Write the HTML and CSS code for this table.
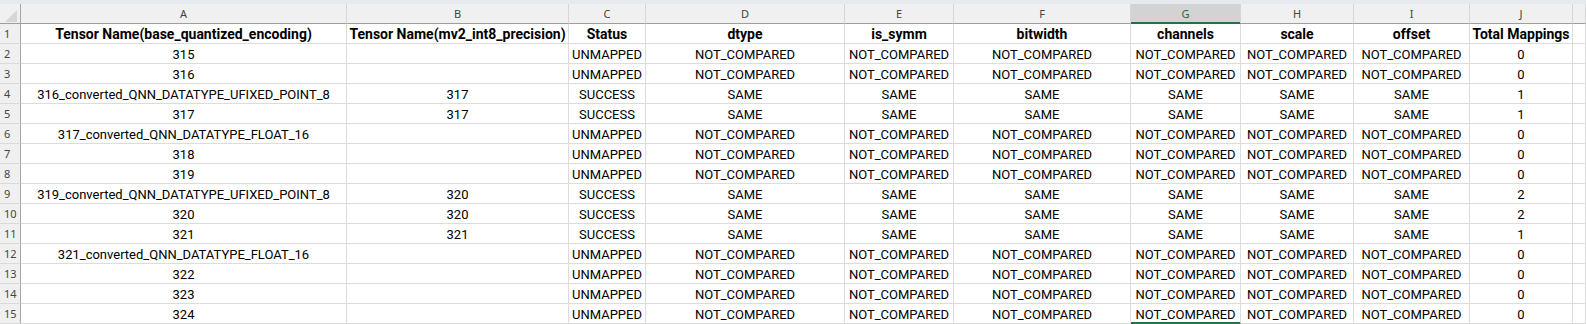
FILE: index.html
```html
<!DOCTYPE html>
<html>
<head>
<meta charset="utf-8">
<link rel="stylesheet" href="styles.css">
</head>
<body>
<div class="sheet">
  <div class="topstrip"></div>
  <div class="row colhead">
    <div class="corner"><svg width="20" height="19" viewBox="0 0 20 19"><polygon points="5,18 17,18 17,6" fill="#d6d6d6"/></svg></div>
    <div class="ch">A</div><div class="ch">B</div><div class="ch">C</div><div class="ch">D</div><div class="ch">E</div><div class="ch">F</div><div class="ch sel">G</div><div class="ch">H</div><div class="ch">I</div><div class="ch">J</div><div class="ch"></div>
  </div>
  <div class="row head">
    <div class="rh">1</div><div class="c">Tensor Name(base_quantized_encoding)</div><div class="c">Tensor Name(mv2_int8_precision)</div><div class="c">Status</div><div class="c">dtype</div><div class="c">is_symm</div><div class="c">bitwidth</div><div class="c">channels</div><div class="c">scale</div><div class="c">offset</div><div class="c">Total Mappings</div><div class="c"></div>
  </div>
  <div class="row">
    <div class="rh">2</div><div class="c">315</div><div class="c"></div><div class="c">UNMAPPED</div><div class="c">NOT_COMPARED</div><div class="c">NOT_COMPARED</div><div class="c">NOT_COMPARED</div><div class="c">NOT_COMPARED</div><div class="c">NOT_COMPARED</div><div class="c">NOT_COMPARED</div><div class="c">0</div><div class="c"></div>
  </div>
  <div class="row">
    <div class="rh">3</div><div class="c">316</div><div class="c"></div><div class="c">UNMAPPED</div><div class="c">NOT_COMPARED</div><div class="c">NOT_COMPARED</div><div class="c">NOT_COMPARED</div><div class="c">NOT_COMPARED</div><div class="c">NOT_COMPARED</div><div class="c">NOT_COMPARED</div><div class="c">0</div><div class="c"></div>
  </div>
  <div class="row">
    <div class="rh">4</div><div class="c">316_converted_QNN_DATATYPE_UFIXED_POINT_8</div><div class="c">317</div><div class="c">SUCCESS</div><div class="c">SAME</div><div class="c">SAME</div><div class="c">SAME</div><div class="c">SAME</div><div class="c">SAME</div><div class="c">SAME</div><div class="c">1</div><div class="c"></div>
  </div>
  <div class="row">
    <div class="rh">5</div><div class="c">317</div><div class="c">317</div><div class="c">SUCCESS</div><div class="c">SAME</div><div class="c">SAME</div><div class="c">SAME</div><div class="c">SAME</div><div class="c">SAME</div><div class="c">SAME</div><div class="c">1</div><div class="c"></div>
  </div>
  <div class="row">
    <div class="rh">6</div><div class="c">317_converted_QNN_DATATYPE_FLOAT_16</div><div class="c"></div><div class="c">UNMAPPED</div><div class="c">NOT_COMPARED</div><div class="c">NOT_COMPARED</div><div class="c">NOT_COMPARED</div><div class="c">NOT_COMPARED</div><div class="c">NOT_COMPARED</div><div class="c">NOT_COMPARED</div><div class="c">0</div><div class="c"></div>
  </div>
  <div class="row">
    <div class="rh">7</div><div class="c">318</div><div class="c"></div><div class="c">UNMAPPED</div><div class="c">NOT_COMPARED</div><div class="c">NOT_COMPARED</div><div class="c">NOT_COMPARED</div><div class="c">NOT_COMPARED</div><div class="c">NOT_COMPARED</div><div class="c">NOT_COMPARED</div><div class="c">0</div><div class="c"></div>
  </div>
  <div class="row">
    <div class="rh">8</div><div class="c">319</div><div class="c"></div><div class="c">UNMAPPED</div><div class="c">NOT_COMPARED</div><div class="c">NOT_COMPARED</div><div class="c">NOT_COMPARED</div><div class="c">NOT_COMPARED</div><div class="c">NOT_COMPARED</div><div class="c">NOT_COMPARED</div><div class="c">0</div><div class="c"></div>
  </div>
  <div class="row">
    <div class="rh">9</div><div class="c">319_converted_QNN_DATATYPE_UFIXED_POINT_8</div><div class="c">320</div><div class="c">SUCCESS</div><div class="c">SAME</div><div class="c">SAME</div><div class="c">SAME</div><div class="c">SAME</div><div class="c">SAME</div><div class="c">SAME</div><div class="c">2</div><div class="c"></div>
  </div>
  <div class="row">
    <div class="rh">10</div><div class="c">320</div><div class="c">320</div><div class="c">SUCCESS</div><div class="c">SAME</div><div class="c">SAME</div><div class="c">SAME</div><div class="c">SAME</div><div class="c">SAME</div><div class="c">SAME</div><div class="c">2</div><div class="c"></div>
  </div>
  <div class="row">
    <div class="rh">11</div><div class="c">321</div><div class="c">321</div><div class="c">SUCCESS</div><div class="c">SAME</div><div class="c">SAME</div><div class="c">SAME</div><div class="c">SAME</div><div class="c">SAME</div><div class="c">SAME</div><div class="c">1</div><div class="c"></div>
  </div>
  <div class="row">
    <div class="rh">12</div><div class="c">321_converted_QNN_DATATYPE_FLOAT_16</div><div class="c"></div><div class="c">UNMAPPED</div><div class="c">NOT_COMPARED</div><div class="c">NOT_COMPARED</div><div class="c">NOT_COMPARED</div><div class="c">NOT_COMPARED</div><div class="c">NOT_COMPARED</div><div class="c">NOT_COMPARED</div><div class="c">0</div><div class="c"></div>
  </div>
  <div class="row">
    <div class="rh">13</div><div class="c">322</div><div class="c"></div><div class="c">UNMAPPED</div><div class="c">NOT_COMPARED</div><div class="c">NOT_COMPARED</div><div class="c">NOT_COMPARED</div><div class="c">NOT_COMPARED</div><div class="c">NOT_COMPARED</div><div class="c">NOT_COMPARED</div><div class="c">0</div><div class="c"></div>
  </div>
  <div class="row">
    <div class="rh">14</div><div class="c">323</div><div class="c"></div><div class="c">UNMAPPED</div><div class="c">NOT_COMPARED</div><div class="c">NOT_COMPARED</div><div class="c">NOT_COMPARED</div><div class="c">NOT_COMPARED</div><div class="c">NOT_COMPARED</div><div class="c">NOT_COMPARED</div><div class="c">0</div><div class="c"></div>
  </div>
  <div class="row">
    <div class="rh">15</div><div class="c">324</div><div class="c"></div><div class="c">UNMAPPED</div><div class="c">NOT_COMPARED</div><div class="c">NOT_COMPARED</div><div class="c">NOT_COMPARED</div><div class="c active">NOT_COMPARED</div><div class="c">NOT_COMPARED</div><div class="c">NOT_COMPARED</div><div class="c">0</div><div class="c"></div>
  </div>
</div>
</body>
</html>
```
FILE: styles.css
```css
html, body {
  margin: 0;
  padding: 0;
  background: #ffffff;
  overflow: hidden;
}
.sheet {
  width: 1586px;
  height: 324px;
  overflow: hidden;
  background: #ffffff;
}
.topstrip {
  height: 4px;
  background: #e6e9ed;
}
.row {
  display: grid;
  grid-template-columns: 21px 326px 222px 77px 199px 109px 177px 110px 113px 116px 103px 1fr;
  height: 20px;
}
.row > div {
  box-sizing: border-box;
  height: 20px;
  border-right: 1px solid #dcdcdc;
  border-bottom: 1px solid #dcdcdc;
  overflow: hidden;
  white-space: nowrap;
}
.c {
  font-family: Roboto, "Liberation Sans", sans-serif;
  font-size: 13px;
  line-height: 18px;
  padding-top: 2px;
  text-align: center;
  color: #000000;
  letter-spacing: 0;
}
.head .c {
  font-weight: bold;
  font-size: 14px;
  line-height: 17px;
}
.rh {
  background: #f0f0f0;
  font-family: "Noto Sans", "Open Sans", sans-serif;
  font-size: 11px;
  line-height: 19px;
  color: #454545;
  padding-left: 4px;
}
.row > .rh {
  border-right: 1px solid #a6a6a6;
  border-bottom-color: #dadada;
}
.colhead {
  height: 20px;
}
.colhead > div {
  background: #f0f0f0;
  border-right: 1px solid #d6d6d6;
  border-bottom: 1px solid #9e9e9e;
}
.row.colhead > .corner {
  border-right: 1px solid #a6a6a6;
  border-bottom: 1px solid #9e9e9e;
}
.corner svg {
  display: block;
}
.ch {
  font-family: "Noto Sans", "Open Sans", sans-serif;
  font-size: 11px;
  line-height: 18px;
  padding-top: 1px;
  text-align: center;
  color: #444444;
}
.row.colhead > .ch.sel {
  background: #d3d3d3;
  color: #1e6b3c;
  border-bottom: 1px solid #217346;
  box-shadow: inset 0 -1px 0 #217346;
}
.row > .c.active {
  border-bottom-color: #217346;
  box-shadow: inset 0 -1px 0 #217346;
}
```
